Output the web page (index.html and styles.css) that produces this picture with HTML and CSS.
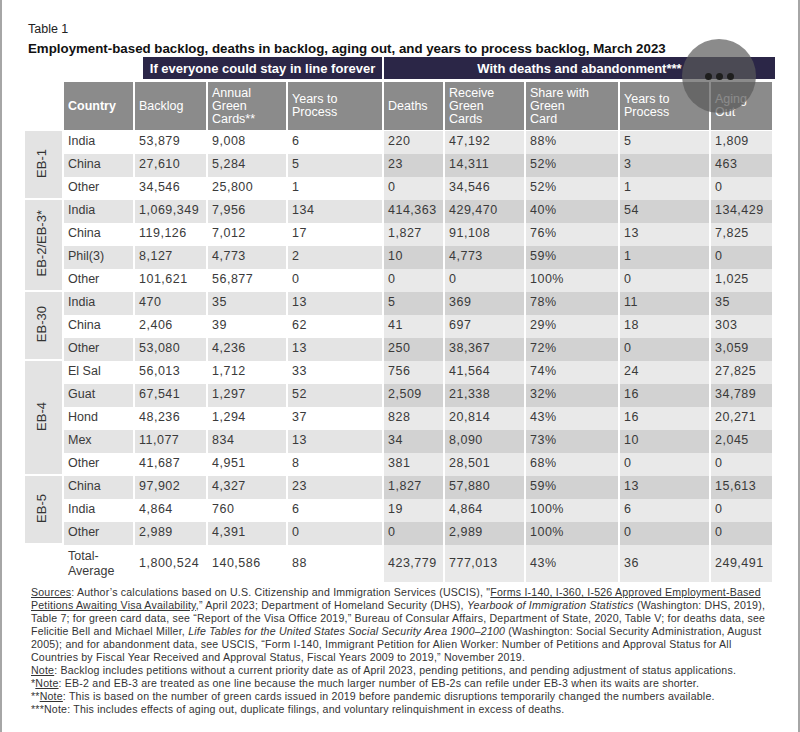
FILE: index.html
```html
<!DOCTYPE html>
<html lang="en">
<head>
<meta charset="utf-8">
<title>Table 1</title>
<link rel="stylesheet" href="styles.css">
</head>
<body>
<div class="page">
  <p class="label">Table 1</p>
  <h1 class="title">Employment-based backlog, deaths in backlog, aging out, and years to process backlog, March 2023</h1>
  <div class="bands">
    <div class="band band-a">If everyone could stay in line forever</div>
    <div class="band band-b">With deaths and abandonment***</div>
  </div>
  <table class="grid">
    <colgroup>
      <col class="c-grp"><col class="c-country"><col class="c-backlog"><col class="c-annual"><col class="c-years">
      <col class="c-deaths"><col class="c-receive"><col class="c-share"><col class="c-years2"><col class="c-aging">
    </colgroup>
    <thead>
      <tr>
        <th class="blank"></th>
        <th class="strong">Country</th>
        <th>Backlog</th>
        <th>Annual<br>Green<br>Cards**</th>
        <th>Years to<br>Process</th>
        <th>Deaths</th>
        <th>Receive<br>Green<br>Cards</th>
        <th>Share with<br>Green<br>Card</th>
        <th>Years to<br>Process</th>
        <th>Aging<br>Out</th>
      </tr>
    </thead>
    <tbody>
      <tr class="w"><th class="grp" rowspan="3"><span class="vt">EB-1</span></th><td>India</td><td class="n">53,879</td><td class="n">9,008</td><td class="n">6</td><td class="n r">220</td><td class="n r">47,192</td><td class="n r">88%</td><td class="n r">5</td><td class="n r">1,809</td></tr>
      <tr class="g"><td>China</td><td class="n">27,610</td><td class="n">5,284</td><td class="n">5</td><td class="n r">23</td><td class="n r">14,311</td><td class="n r">52%</td><td class="n r">3</td><td class="n r">463</td></tr>
      <tr class="w"><td>Other</td><td class="n">34,546</td><td class="n">25,800</td><td class="n">1</td><td class="n r">0</td><td class="n r">34,546</td><td class="n r">52%</td><td class="n r">1</td><td class="n r">0</td></tr>

      <tr class="g"><th class="grp" rowspan="4"><span class="vt">EB-2/EB-3*</span></th><td>India</td><td class="n">1,069,349</td><td class="n">7,956</td><td class="n">134</td><td class="n r">414,363</td><td class="n r">429,470</td><td class="n r">40%</td><td class="n r">54</td><td class="n r">134,429</td></tr>
      <tr class="w"><td>China</td><td class="n">119,126</td><td class="n">7,012</td><td class="n">17</td><td class="n r">1,827</td><td class="n r">91,108</td><td class="n r">76%</td><td class="n r">13</td><td class="n r">7,825</td></tr>
      <tr class="g"><td>Phil(3)</td><td class="n">8,127</td><td class="n">4,773</td><td class="n">2</td><td class="n r">10</td><td class="n r">4,773</td><td class="n r">59%</td><td class="n r">1</td><td class="n r">0</td></tr>
      <tr class="w"><td>Other</td><td class="n">101,621</td><td class="n">56,877</td><td class="n">0</td><td class="n r">0</td><td class="n r">0</td><td class="n r">100%</td><td class="n r">0</td><td class="n r">1,025</td></tr>

      <tr class="g"><th class="grp" rowspan="3"><span class="vt">EB-30</span></th><td>India</td><td class="n">470</td><td class="n">35</td><td class="n">13</td><td class="n r">5</td><td class="n r">369</td><td class="n r">78%</td><td class="n r">11</td><td class="n r">35</td></tr>
      <tr class="w"><td>China</td><td class="n">2,406</td><td class="n">39</td><td class="n">62</td><td class="n r">41</td><td class="n r">697</td><td class="n r">29%</td><td class="n r">18</td><td class="n r">303</td></tr>
      <tr class="g"><td>Other</td><td class="n">53,080</td><td class="n">4,236</td><td class="n">13</td><td class="n r">250</td><td class="n r">38,367</td><td class="n r">72%</td><td class="n r">0</td><td class="n r">3,059</td></tr>

      <tr class="w"><th class="grp" rowspan="5"><span class="vt">EB-4</span></th><td>El Sal</td><td class="n">56,013</td><td class="n">1,712</td><td class="n">33</td><td class="n r">756</td><td class="n r">41,564</td><td class="n r">74%</td><td class="n r">24</td><td class="n r">27,825</td></tr>
      <tr class="g"><td>Guat</td><td class="n">67,541</td><td class="n">1,297</td><td class="n">52</td><td class="n r">2,509</td><td class="n r">21,338</td><td class="n r">32%</td><td class="n r">16</td><td class="n r">34,789</td></tr>
      <tr class="w"><td>Hond</td><td class="n">48,236</td><td class="n">1,294</td><td class="n">37</td><td class="n r">828</td><td class="n r">20,814</td><td class="n r">43%</td><td class="n r">16</td><td class="n r">20,271</td></tr>
      <tr class="g"><td>Mex</td><td class="n">11,077</td><td class="n">834</td><td class="n">13</td><td class="n r">34</td><td class="n r">8,090</td><td class="n r">73%</td><td class="n r">10</td><td class="n r">2,045</td></tr>
      <tr class="w"><td>Other</td><td class="n">41,687</td><td class="n">4,951</td><td class="n">8</td><td class="n r">381</td><td class="n r">28,501</td><td class="n r">68%</td><td class="n r">0</td><td class="n r">0</td></tr>

      <tr class="g"><th class="grp" rowspan="3"><span class="vt">EB-5</span></th><td>China</td><td class="n">97,902</td><td class="n">4,327</td><td class="n">23</td><td class="n r">1,827</td><td class="n r">57,880</td><td class="n r">59%</td><td class="n r">13</td><td class="n r">15,613</td></tr>
      <tr class="w"><td>India</td><td class="n">4,864</td><td class="n">760</td><td class="n">6</td><td class="n r">19</td><td class="n r">4,864</td><td class="n r">100%</td><td class="n r">6</td><td class="n r">0</td></tr>
      <tr class="g"><td>Other</td><td class="n">2,989</td><td class="n">4,391</td><td class="n">0</td><td class="n r">0</td><td class="n r">2,989</td><td class="n r">100%</td><td class="n r">0</td><td class="n r">0</td></tr>

      <tr class="w total"><td class="blank"></td><td>Total-<br>Average</td><td class="n">1,800,524</td><td class="n">140,586</td><td class="n">88</td><td class="n r">423,779</td><td class="n r">777,013</td><td class="n r">43%</td><td class="n r">36</td><td class="n r">249,491</td></tr>
    </tbody>
  </table>
  <div class="notes">
    <u>Sources</u>: Author’s calculations based on U.S. Citizenship and Immigration Services (USCIS), "<u>Forms I-140, I-360, I-526 Approved Employment-Based</u><br>
    <u>Petitions Awaiting Visa Availability</u>,” April 2023; Department of Homeland Security (DHS), <i>Yearbook of Immigration Statistics</i> (Washington: DHS, 2019),<br>
    Table 7; for green card data, see “Report of the Visa Office 2019,” Bureau of Consular Affairs, Department of State, 2020, Table V; for deaths data, see<br>
    Felicitie Bell and Michael Miller, <i>Life Tables for the United States Social Security Area 1900–2100</i> (Washington: Social Security Administration, August<br>
    2005); and for abandonment data, see USCIS, “Form I-140, Immigrant Petition for Alien Worker: Number of Petitions and Approval Status for All<br>
    Countries by Fiscal Year Received and Approval Status, Fiscal Years 2009 to 2019,” November 2019.<br>
    <u>Note</u>: Backlog includes petitions without a current priority date as of April 2023, pending petitions, and pending adjustment of status applications.<br>
    *<u>Note</u>: EB-2 and EB-3 are treated as one line because the much larger number of EB-2s can refile under EB-3 when its waits are shorter.<br>
    **<u>Note</u>: This is based on the number of green cards issued in 2019 before pandemic disruptions temporarily changed the numbers available.<br>
    ***Note: This includes effects of aging out, duplicate filings, and voluntary relinquishment in excess of deaths.
  </div>
  <div class="more" aria-label="More options"><span class="dot"></span><span class="dot"></span><span class="dot"></span></div>
</div>
</body>
</html>
```

FILE: styles.css
```css
html, body {
  margin: 0;
  padding: 0;
  background: #fff;
}

body {
  font-family: "Liberation Sans", Arial, sans-serif;
  color: #333;
}

.page {
  position: relative;
  width: 800px;
  height: 732px;
  box-sizing: border-box;
  border-left: 2px solid #a6a6a6;
  border-right: 2px solid #a6a6a6;
  padding-left: 23px;
  overflow: hidden;
}

.label {
  margin: 0;
  padding: 22px 0 0 3px;
  font-size: 12.5px;
  line-height: 15px;
  color: #222;
}

.title {
  margin: 4px 0 0;
  padding-left: 3px;
  font-size: 13.3px;
  line-height: 16px;
  font-weight: bold;
  color: #111;
  white-space: nowrap;
}

.bands {
  display: flex;
  gap: 2px;
  margin-left: 118px;
  height: 22px;
}

.band {
  background: #2b2647;
  color: #fff;
  font-weight: bold;
  font-size: 13px;
  display: flex;
  align-items: center;
  justify-content: center;
  white-space: nowrap;
}

.band-a { width: 239px; }
.band-b { width: 391px; }

.grid {
  margin-top: 3px;
  width: 747px;
  table-layout: fixed;
  border-collapse: separate;
  border-spacing: 0;
  font-size: 12.5px;
  color: #3a3a3a;
}

.c-grp { width: 37px; }
.c-country { width: 71px; }
.c-backlog { width: 73px; }
.c-annual { width: 80px; }
.c-years { width: 96px; }
.c-deaths { width: 61px; }
.c-receive { width: 81px; }
.c-share { width: 94px; }
.c-years2 { width: 91px; }
.c-aging { width: 63px; }

.grid th,
.grid td {
  padding: 0 0 0 4px;
  border-left: 2px solid #fff;
  text-align: left;
  white-space: nowrap;
  overflow: visible;
}

.grid thead th {
  background: #8b8b8b;
  color: #fff;
  font-weight: normal;
  height: 48px;
  line-height: 13px;
  vertical-align: middle;
  border-bottom: 1px solid #fff;
}

.grid thead th.strong {
  font-weight: bold;
}

.grid .blank,
.grid thead th.blank {
  background: transparent;
  border-left: 0;
}

.grid tbody td {
  height: 23px;
  line-height: 15px;
  vertical-align: middle;
  padding-bottom: 3px;
  box-sizing: border-box;
}

.grid td.n {
  letter-spacing: 0.5px;
}

.grid th.grp {
  background: #e3e3e3;
  border-left: 0;
  border-bottom: 2px solid #fff;
  padding: 0 4px 0 0;
  text-align: center;
  vertical-align: middle;
  font-weight: normal;
}

.vt {
  display: inline-block;
  writing-mode: vertical-rl;
  transform: rotate(180deg);
  font-size: 13px;
  line-height: 15px;
  color: #333;
}

.grid tr.g td { background: #e4e4e4; }
.grid tr.g td.r { background: #d2d2d2; }
.grid tr.w td.r { background: #e9e9e9; }

.grid tr.total td {
  height: 37px;
  line-height: 15px;
  padding-bottom: 0;
}

.grid tr.total td.blank {
  background: transparent;
}

.notes {
  margin-top: 4px;
  padding-left: 6px;
  font-size: 10.6px;
  letter-spacing: 0.2px;
  line-height: 13px;
  color: #333;
  white-space: nowrap;
}

.notes u {
  text-decoration: underline;
  text-underline-offset: 1px;
}

.more {
  position: absolute;
  left: 680px;
  top: 39px;
  width: 74px;
  height: 74px;
  border-radius: 50%;
  background: rgba(90, 90, 90, 0.7);
  display: flex;
  align-items: center;
  justify-content: center;
  gap: 4px;
}

.dot {
  width: 7px;
  height: 7px;
  border-radius: 50%;
  background: #1e1e1e;
}
```
